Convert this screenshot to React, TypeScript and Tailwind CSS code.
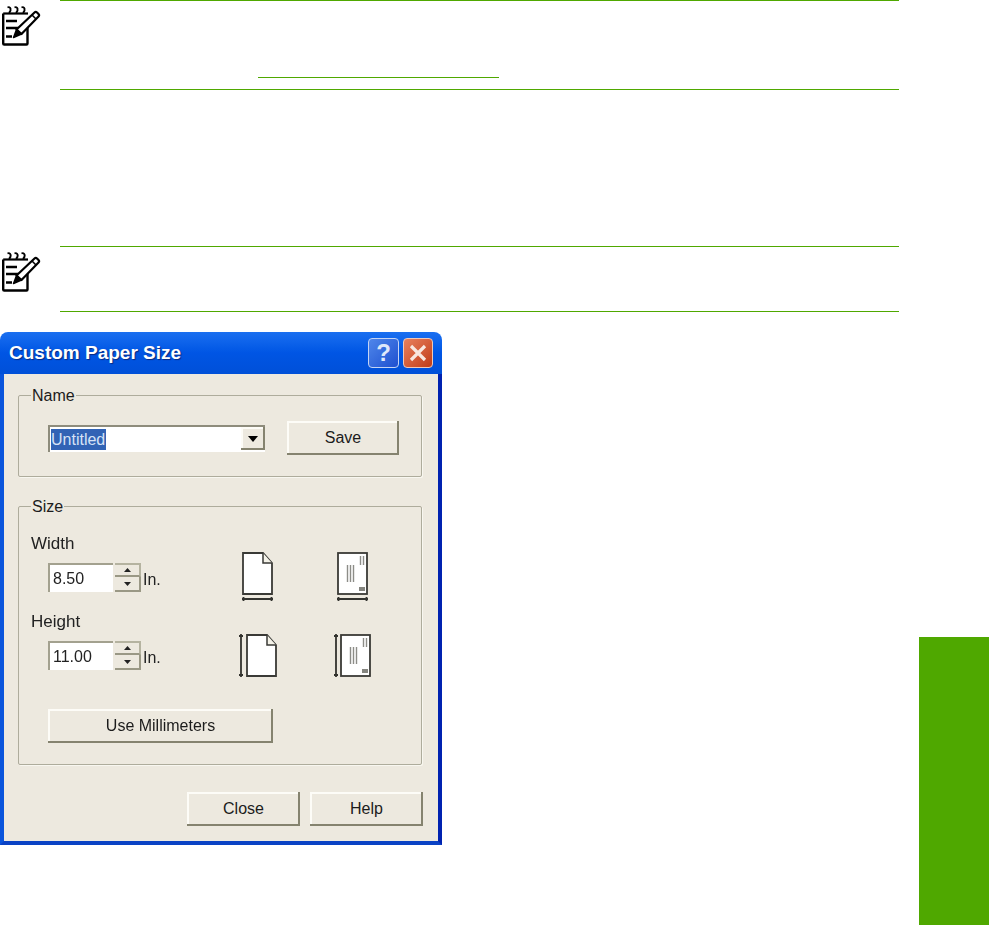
import React from "react";

const raised = "bg-[#ede9df] shadow-[inset_-2px_-2px_0_#85836f,inset_2px_2px_0_#fdfcf7] flex items-center justify-center text-[16px] text-[#1c1c1c]";

function NoteIcon() {
  return (
    <svg width="40" height="44" viewBox="0 0 40 44" fill="none" stroke="#000" className="mt-[3px] block">
      <path d="M2.2 10.5V40.5a1 1 0 0 0 1 1H25.5a1 1 0 0 0 1-1V24" strokeWidth="2.4" />
      <path d="M2.2 10.5H27" strokeWidth="2.2" />
      <path d="M6.5 4.5c3-1.5 4.5 2.5 1.5 5.5M13.5 4.5c3-1.5 4.5 2.5 1.5 5.5M20.5 4.5c3-1.5 4.5 2.5 1.5 5.5" strokeWidth="1.9" />
      <path d="M5 18H16M5 25H17M5 33.5H11" strokeWidth="2.6" />
      <path d="M33.5 9.5a1.8 1.8 0 0 1 2.5 0l1.5 1.5a1.8 1.8 0 0 1 0 2.5L20.5 31L15.5 26.5Z" fill="#fff" strokeWidth="2.2" strokeLinejoin="round" />
      <path d="M15.5 26.5L12.5 34.5L20.5 31Z" fill="#000" strokeWidth="1.4" strokeLinejoin="round" />
      <path d="M31 12l4 4" strokeWidth="1.6" />
    </svg>
  );
}

function Note({ heightClass, children }: { heightClass: string; children?: React.ReactNode }) {
  return (
    <div className="flex items-start">
      <div className="w-[60px] shrink-0 pl-px"><NoteIcon /></div>
      <div className={`w-[839px] border-y border-[#4fa800] ${heightClass}`}>{children}</div>
    </div>
  );
}

function Group({ label, className, children }: { label: string; className: string; children: React.ReactNode }) {
  return (
    <div className={`relative ml-[14px] w-[404px] rounded-[2px] border border-[#aeac9c] shadow-[1px_1px_0_#f8f7f0] ${className}`}>
      <span className="absolute left-[12px] top-[-10px] bg-[#ede9df] px-[1px] text-[16px] leading-[20px] text-[#1c1c1c]">{label}</span>
      {children}
    </div>
  );
}

function Spin({ value }: { value: string }) {
  return (
    <div className="mt-[9px] ml-[17px] flex h-[29px] items-start">
      <div className="flex h-[29px] w-[65px] items-center bg-white pl-[3px] text-[16px] text-[#222] border-t-2 border-l-2 border-[#a3a18f]">{value}</div>
      <div className="ml-[2px] flex w-[26px] flex-col">
        <div className="flex h-[14px] items-center justify-center bg-[#ede9df] border-t-2 border-r-2 border-[#b5b3a0] border-b-2 border-b-[#9a9885]">
          <svg width="7" height="4" viewBox="0 0 7 4"><path d="M3.5 0L7 4H0Z" fill="#222" /></svg>
        </div>
        <div className="flex h-[15px] items-center justify-center bg-[#ede9df] border-r-2 border-b-2 border-[#9a9885]">
          <svg width="7" height="4" viewBox="0 0 7 4"><path d="M3.5 4L7 0H0Z" fill="#222" /></svg>
        </div>
      </div>
      <span className="ml-[2px] mt-[7px] text-[16px] leading-[20px] text-[#222]">In.</span>
    </div>
  );
}

function Page({ x = 1, y = 1 }: { x?: number; y?: number }) {
  return (
    <g>
      <path d={`M${x} ${y}H${x + 20}L${x + 29} ${y + 10}V${y + 41}H${x}Z`} fill="#fff" stroke="#3a3a36" strokeWidth="1.8" />
      <path d={`M${x + 20} ${y}V${y + 10}H${x + 29}`} fill="#f4f2e8" stroke="#3a3a36" strokeWidth="1.5" />
    </g>
  );
}

function Envelope({ x = 1, y = 1 }: { x?: number; y?: number }) {
  return (
    <g>
      <rect x={x} y={y} width="29" height="41" fill="#fff" stroke="#3a3a36" strokeWidth="1.8" />
      <path d={`M${x + 22.5} ${y + 3}V${y + 12}M${x + 25.5} ${y + 3}V${y + 12}M${x + 9.5} ${y + 12}V${y + 29}M${x + 12.5} ${y + 12}V${y + 29}M${x + 15.5} ${y + 12}V${y + 29}`} stroke="#8d8d88" strokeWidth="1.4" />
      <rect x={x + 21} y={y + 34} width="6" height="4" fill="#85857f" />
    </g>
  );
}

function HArrow({ x, w }: { x: number; w: number }) {
  return <path d={`M${x} 47H${x + w}M${x + 1.5} 45V49M${x + w - 1.5} 45V49`} stroke="#33332f" strokeWidth="1.8" />;
}

function VArrow({ x, top, h }: { x: number; top: number; h: number }) {
  return <path d={`M${x} ${top}V${top + h}M${x - 2} ${top + 2}H${x + 2}M${x - 2} ${top + h - 2}H${x + 2}`} stroke="#33332f" strokeWidth="1.8" />;
}

export default function App() {
  return (
    <div className="flex h-[925px] w-[989px] overflow-hidden bg-white font-['Liberation_Sans',Arial,sans-serif]">
      <div className="w-[919px] shrink-0">
        <Note heightClass="h-[90px]">
          <div className="ml-[198px] mt-[76px] h-px w-[241px] bg-[#4fa800]" />
        </Note>
        <div className="mt-[156px]">
          <Note heightClass="h-[66px]" />
        </div>

        <div className="mt-[20px] flex h-[513px] w-[442px] flex-col overflow-hidden rounded-t-[8px] blur-[0.5px]">
          <div className="flex h-[42px] shrink-0 items-center justify-between bg-gradient-to-b from-[#1a6ff0] via-[#0055e4] to-[#0050d8] pl-[9px] pr-[9px]">
            <span className="text-[19px] font-bold text-white [text-shadow:1px_1px_1px_#0a2a80]">Custom Paper Size</span>
            <div className="flex gap-[4px]">
              <div className="flex h-[30px] w-[31px] items-center justify-center rounded-[4px] border border-[#c4d4f4] bg-gradient-to-br from-[#4f86ea] to-[#1f4fd0] text-[24px] font-bold leading-none text-[#dfe8fa]">?</div>
              <div className="flex h-[30px] w-[30px] items-center justify-center rounded-[4px] border border-[#f0c8b8] bg-gradient-to-br from-[#e8805c] to-[#c03a14]">
                <svg width="18" height="18" viewBox="0 0 18 18"><path d="M2 2L16 16M16 2L2 16" stroke="#f8e8e0" strokeWidth="3.2" /></svg>
              </div>
            </div>
          </div>

          <div className="flex flex-1 flex-col border-x-4 border-b-4 border-l-[#0a55dc] border-r-[#0022b0] border-b-[#0a42c4] bg-[#ede9df]">
            <Group label="Name" className="mt-[21px] h-[82px]">
              <div className="flex items-center pl-[29px] pt-[25px]">
                <div className="flex h-[27px] w-[217px] items-center justify-between border-t-2 border-l-2 border-[#8e8c7c] bg-white pl-[1px]">
                  <span className="bg-[#3163b5] pr-[1px] text-[16px] leading-[21px] text-[#d6e2f6]">Untitled</span>
                  <div className={`h-[23px] w-[24px] ${raised} mb-[1px]`}>
                    <svg width="10" height="6" viewBox="0 0 10 6"><path d="M0 0H10L5 6Z" fill="#000" /></svg>
                  </div>
                </div>
                <button className={`ml-[22px] h-[34px] w-[112px] ${raised}`}>Save</button>
              </div>
            </Group>

            <Group label="Size" className="mt-[29px] h-[259px]">
              <div className="flex h-[58px] pl-[12px] pt-0 mt-[27px]">
                <div className="w-[210px]">
                  <div className="text-[17px] leading-[20px] text-[#222]">Width</div>
                  <Spin value="8.50" />
                </div>
                <svg width="130" height="50" viewBox="0 0 130 50" className="mt-[18px] block shrink-0">
                  <Page x={2} y={1} />
                  <HArrow x={1} w={31} />
                  <Envelope x={97} y={1} />
                  <HArrow x={96} w={31} />
                </svg>
              </div>
              <div className="mt-[20px] flex h-[58px] pl-[12px]">
                <div className="w-[206px]">
                  <div className="text-[17px] leading-[20px] text-[#222]">Height</div>
                  <Spin value="11.00" />
                </div>
                <svg width="136" height="46" viewBox="0 0 136 46" className="mt-[21px] block shrink-0">
                  <VArrow x={4} top={1} h={43} />
                  <Page x={10} y={2} />
                  <VArrow x={99} top={1} h={43} />
                  <Envelope x={104} y={2} />
                </svg>
              </div>
              <button className={`ml-[29px] mt-[39px] h-[34px] w-[225px] ${raised}`}>Use Millimeters</button>
            </Group>

            <div className="mt-[27px] flex justify-end gap-[10px] pr-[15px]">
              <button className={`h-[34px] w-[113px] ${raised}`}>Close</button>
              <button className={`h-[34px] w-[113px] ${raised}`}>Help</button>
            </div>
          </div>
        </div>
      </div>
      <div className="mt-[637px] h-[288px] w-[70px] bg-[#4fa800]" />
    </div>
  );
}
